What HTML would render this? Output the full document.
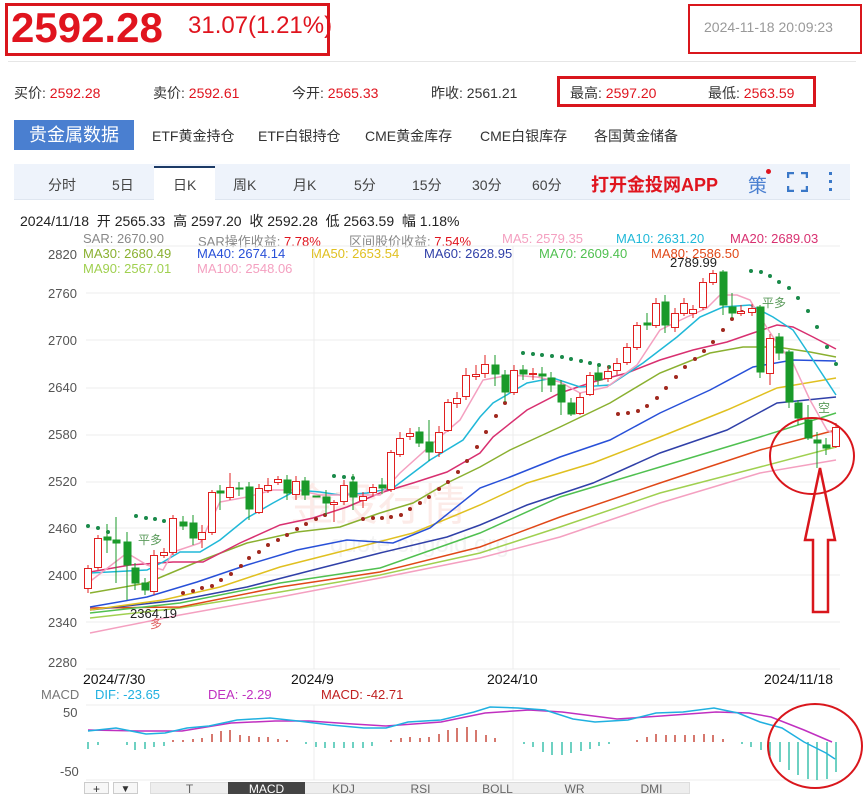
<!DOCTYPE html>
<html><head><meta charset="utf-8"><style>
*{margin:0;padding:0;box-sizing:border-box}
body{width:864px;height:791px;overflow:hidden;background:#fff;font-family:"Liberation Sans","Noto Sans CJK SC",sans-serif;position:relative;color:#333}
.a{position:absolute;white-space:nowrap}
.r{color:#e0141e}
.q{font-size:14px}
.lg{font-size:13px}
.tb{position:absolute;top:782px;height:12px;font-size:12px;line-height:14px;color:#666;text-align:center;width:77px}
</style></head><body>
<div class="a" style="left:5px;top:3px;width:325px;height:53px;border:3px solid #d9161c"></div>
<div class="a r" style="left:11px;top:4px;font-size:42px;font-weight:bold;letter-spacing:0">2592.28</div>
<div class="a r" style="left:188px;top:12px;font-size:24px">31.07(1.21%)</div>
<div class="a" style="left:688px;top:4px;width:174px;height:50px;border:2px solid #d9161c"></div>
<div class="a" style="left:704px;top:19px;font-size:14px;color:#999">2024-11-18 20:09:23</div>
<div class="a" style="left:8px;top:61px;width:848px;height:1px;background:#e6e6e6"></div>

<div class="a q" style="left:14px;top:83px">买价:&nbsp;<span class="r">2592.28</span></div>
<div class="a q" style="left:153px;top:83px">卖价:&nbsp;<span class="r">2592.61</span></div>
<div class="a q" style="left:292px;top:83px">今开:&nbsp;<span class="r">2565.33</span></div>
<div class="a q" style="left:431px;top:83px">昨收:&nbsp;2561.21</div>
<div class="a q" style="left:570px;top:83px">最高:&nbsp;<span class="r">2597.20</span></div>
<div class="a q" style="left:708px;top:83px">最低:&nbsp;<span class="r">2563.59</span></div>
<div class="a" style="left:557px;top:76px;width:259px;height:31px;border:3px solid #d9161c"></div>

<div class="a" style="left:14px;top:120px;width:120px;height:30px;background:#4a7fd0;color:#fff;font-size:18px;line-height:30px;text-align:center">贵金属数据</div>
<div class="a q" style="left:152px;top:126px">ETF黄金持仓</div>
<div class="a q" style="left:258px;top:126px">ETF白银持仓</div>
<div class="a q" style="left:365px;top:126px">CME黄金库存</div>
<div class="a q" style="left:480px;top:126px">CME白银库存</div>
<div class="a q" style="left:594px;top:126px">各国黄金储备</div>

<div class="a" style="left:14px;top:164px;width:836px;height:36px;background:#eef3fb;border-bottom:1px solid #dfe6f0"></div>
<div class="a" style="left:154px;top:166px;width:61px;height:35px;background:#fff;border-top:2px solid #1c3a66"></div>
<div class="a q" style="left:48px;top:175px;color:#444">分时</div>
<div class="a q" style="left:112px;top:175px;color:#444">5日</div>
<div class="a q" style="left:173px;top:175px;color:#444">日K</div>
<div class="a q" style="left:233px;top:175px;color:#444">周K</div>
<div class="a q" style="left:293px;top:175px;color:#444">月K</div>
<div class="a q" style="left:354px;top:175px;color:#444">5分</div>
<div class="a q" style="left:412px;top:175px;color:#444">15分</div>
<div class="a q" style="left:472px;top:175px;color:#444">30分</div>
<div class="a q" style="left:532px;top:175px;color:#444">60分</div>
<div class="a r" style="left:591px;top:171px;font-size:18px;font-weight:bold">打开金投网APP</div>
<div class="a" style="left:748px;top:171px;font-size:19px;color:#4a7fd0">策</div>
<div class="a" style="left:766px;top:169px;width:5px;height:5px;border-radius:50%;background:#e0141e"></div>
<svg class="a" style="left:787px;top:172px" width="21" height="20"><path d="M1 6V1h6M14 1h6v5M20 14v5h-6M7 19H1v-5" stroke="#3a78c8" stroke-width="2.5" fill="none"/></svg>
<svg class="a" style="left:828px;top:171px" width="6" height="22"><rect x="1" y="1" width="3" height="3" fill="#3a78c8"/><rect x="1" y="9" width="3" height="3" fill="#3a78c8"/><rect x="1" y="17" width="3" height="3" fill="#3a78c8"/></svg>

<div class="a q" style="left:20px;top:211px;color:#222">2024/11/18 &nbsp;开 2565.33 &nbsp;高 2597.20 &nbsp;收 2592.28 &nbsp;低 2563.59 &nbsp;幅 1.18%</div>
<div class="a lg" style="left:83px;top:231px;color:#888">SAR: 2670.90</div>
<div class="a lg" style="left:198px;top:231px;color:#888">SAR操作收益: <span class="r">7.78%</span></div>
<div class="a lg" style="left:349px;top:231px;color:#888">区间股价收益: <span class="r">7.54%</span></div>
<div class="a lg" style="left:502px;top:231px;color:#f4a0c0">MA5: 2579.35</div>
<div class="a lg" style="left:616px;top:231px;color:#20b8d8">MA10: 2631.20</div>
<div class="a lg" style="left:730px;top:231px;color:#d83070">MA20: 2689.03</div>
<div class="a lg" style="left:83px;top:246px;color:#8ab030">MA30: 2680.49</div>
<div class="a lg" style="left:197px;top:246px;color:#2850d8">MA40: 2674.14</div>
<div class="a lg" style="left:311px;top:246px;color:#e0c020">MA50: 2653.54</div>
<div class="a lg" style="left:424px;top:246px;color:#3040a8">MA60: 2628.95</div>
<div class="a lg" style="left:539px;top:246px;color:#50c050">MA70: 2609.40</div>
<div class="a lg" style="left:651px;top:246px;color:#e04818">MA80: 2586.50</div>
<div class="a lg" style="left:83px;top:261px;color:#a0d050">MA90: 2567.01</div>
<div class="a lg" style="left:197px;top:261px;color:#f4a0c0">MA100: 2548.06</div>

<div class="a lg" style="left:48px;top:247px;color:#555">2820</div>
<div class="a lg" style="left:48px;top:286px;color:#555">2760</div>
<div class="a lg" style="left:48px;top:333px;color:#555">2700</div>
<div class="a lg" style="left:48px;top:380px;color:#555">2640</div>
<div class="a lg" style="left:48px;top:427px;color:#555">2580</div>
<div class="a lg" style="left:48px;top:474px;color:#555">2520</div>
<div class="a lg" style="left:48px;top:521px;color:#555">2460</div>
<div class="a lg" style="left:48px;top:568px;color:#555">2400</div>
<div class="a lg" style="left:48px;top:615px;color:#555">2340</div>
<div class="a lg" style="left:48px;top:655px;color:#555">2280</div>

<svg class="a" style="left:0;top:0" width="864" height="791">
<g stroke="#ececec" stroke-width="1">
<line x1="86" y1="246" x2="840" y2="246"/><line x1="86" y1="293" x2="840" y2="293"/><line x1="86" y1="340" x2="840" y2="340"/><line x1="86" y1="388" x2="840" y2="388"/><line x1="86" y1="435" x2="840" y2="435"/><line x1="86" y1="482" x2="840" y2="482"/><line x1="86" y1="528" x2="840" y2="528"/><line x1="86" y1="575" x2="840" y2="575"/><line x1="86" y1="622" x2="840" y2="622"/><line x1="86" y1="669" x2="840" y2="669"/>
<line x1="314" y1="246" x2="314" y2="669"/><line x1="513" y1="246" x2="513" y2="669"/>
<line x1="86" y1="705" x2="840" y2="705"/><line x1="86" y1="780" x2="840" y2="780"/>
<line x1="314" y1="705" x2="314" y2="780"/><line x1="513" y1="705" x2="513" y2="780"/>
</g>
<text x="290" y="520" font-size="44" fill="#fcebe8" font-family="Noto Sans CJK SC">金投行情</text>
<text x="330" y="552" font-size="24" fill="#f3f3f3" font-family="Liberation Sans">quote.cngold.org</text>
<g fill="none" stroke-width="1.5">
<polyline stroke="#f4a0c0" points="90,633 180,615 280,597 380,578 480,558 560,537 660,503 760,473 836,460"/>
<polyline stroke="#a0d050" points="90,618 180,608 280,592 380,575 480,553 560,527 660,493 760,467 836,447"/>
<polyline stroke="#e04818" points="90,608 180,607 280,587 380,572 480,547 560,517 660,483 760,450 836,430"/>
<polyline stroke="#50c050" points="90,613 180,603 280,583 380,568 480,533 560,497 660,467 760,437 836,413"/>
<polyline stroke="#3040a8" points="90,610 180,600 247,587 313,570 380,553 447,537 480,525 527,505 593,483 660,453 727,430 777,403 836,397"/>
<polyline stroke="#e0c020" points="90,610 163,600 220,587 280,567 347,550 413,533 480,505 527,483 593,463 660,437 727,410 777,388 836,378"/>
<polyline stroke="#2850d8" points="90,607 147,597 197,582 247,565 297,550 347,540 393,543 430,528 480,488 510,477 560,457 610,440 660,413 710,390 753,367 793,360 836,361"/>
<polyline stroke="#8ab030" points="90,593 147,583 197,562 247,543 297,532 340,527 380,513 413,503 447,483 480,467 510,450 560,427 610,403 660,373 710,353 743,347 777,347 810,352 836,357"/>
<polyline stroke="#d83070" points="90,572 130,565 173,562 203,562 240,543 280,525 313,518 347,507 380,493 413,483 447,472 480,453 493,437 527,410 560,393 593,382 627,373 660,360 693,350 727,342 753,333 777,325 793,327 813,337 836,349"/>
<polyline stroke="#20b8d8" points="90,573 147,570 163,562 180,552 200,552 220,540 247,518 273,503 297,490 320,492 340,495 367,493 393,488 430,460 463,440 480,417 493,403 527,383 553,378 580,387 610,385 643,363 677,337 700,317 723,307 750,305 773,317 793,330 813,360 836,395"/>
<polyline stroke="#f4a0c0" points="88,583 127,553 147,565 163,570 173,552 200,543 220,502 247,497 273,490 297,490 320,495 347,495 380,495 400,473 440,437 460,420 483,380 510,375 537,377 560,382 580,393 607,387 637,365 660,330 687,317 707,308 720,295 737,295 750,300 760,317 777,343 793,363 810,400 827,430 836,435"/>
</g>
<g fill="#1a8a4a">
<circle cx="88" cy="526" r="2"/><circle cx="98" cy="528" r="2"/><circle cx="108" cy="532" r="2"/><circle cx="136" cy="516" r="2"/><circle cx="146" cy="518" r="2"/><circle cx="155" cy="519" r="2"/><circle cx="164" cy="521" r="2"/><circle cx="174" cy="523" r="2"/><circle cx="334" cy="476" r="2"/><circle cx="344" cy="477" r="2"/><circle cx="353" cy="478" r="2"/>
<circle cx="523" cy="353" r="2"/><circle cx="533" cy="354" r="2"/><circle cx="542" cy="355" r="2"/><circle cx="552" cy="356" r="2"/><circle cx="562" cy="357" r="2"/><circle cx="571" cy="359" r="2"/><circle cx="581" cy="361" r="2"/><circle cx="590" cy="363" r="2"/><circle cx="599" cy="365" r="2"/><circle cx="609" cy="367" r="2"/>
<circle cx="751" cy="271" r="2"/><circle cx="761" cy="272" r="2"/><circle cx="770" cy="276" r="2"/><circle cx="779" cy="282" r="2"/><circle cx="789" cy="288" r="2"/><circle cx="798" cy="298" r="2"/><circle cx="808" cy="311" r="2"/><circle cx="817" cy="327" r="2"/><circle cx="827" cy="347" r="2"/><circle cx="836" cy="364" r="2"/>
</g>
<g fill="#a0281e">
<circle cx="183" cy="593" r="2"/><circle cx="193" cy="591" r="2"/><circle cx="202" cy="588" r="2"/><circle cx="212" cy="586" r="2"/><circle cx="221" cy="580" r="2"/><circle cx="231" cy="574" r="2"/><circle cx="241" cy="566" r="2"/><circle cx="249" cy="558" r="2"/><circle cx="259" cy="552" r="2"/><circle cx="268" cy="545" r="2"/><circle cx="278" cy="540" r="2"/><circle cx="287" cy="535" r="2"/><circle cx="297" cy="529" r="2"/><circle cx="306" cy="524" r="2"/><circle cx="316" cy="519" r="2"/><circle cx="325" cy="515" r="2"/>
<circle cx="363" cy="519" r="2"/><circle cx="373" cy="518" r="2"/><circle cx="382" cy="518" r="2"/><circle cx="391" cy="517" r="2"/><circle cx="401" cy="515" r="2"/><circle cx="410" cy="509" r="2"/><circle cx="420" cy="503" r="2"/><circle cx="429" cy="497" r="2"/><circle cx="439" cy="489" r="2"/><circle cx="448" cy="482" r="2"/><circle cx="458" cy="472" r="2"/><circle cx="467" cy="461" r="2"/><circle cx="477" cy="447" r="2"/><circle cx="486" cy="432" r="2"/><circle cx="496" cy="416" r="2"/><circle cx="505" cy="403" r="2"/>
<circle cx="618" cy="414" r="2"/><circle cx="628" cy="413" r="2"/><circle cx="638" cy="411" r="2"/><circle cx="647" cy="406" r="2"/><circle cx="657" cy="398" r="2"/><circle cx="666" cy="388" r="2"/><circle cx="676" cy="377" r="2"/><circle cx="685" cy="367" r="2"/><circle cx="695" cy="359" r="2"/><circle cx="704" cy="351" r="2"/><circle cx="713" cy="342" r="2"/><circle cx="723" cy="330" r="2"/><circle cx="732" cy="319" r="2"/><circle cx="742" cy="312" r="2"/><circle cx="751" cy="310" r="2"/>
</g>
<g stroke="#1a9a2a" fill="#1a9a2a" stroke-width="1">
<line x1="107" y1="524" x2="107" y2="553"/><rect x="104" y="537" width="7" height="3"/>
<line x1="116" y1="517" x2="116" y2="583"/><rect x="113" y="540" width="7" height="3"/>
<line x1="127" y1="532" x2="127" y2="600"/><rect x="124" y="542" width="7" height="23"/>
<line x1="135" y1="563" x2="135" y2="590"/><rect x="132" y="568" width="7" height="15"/>
<line x1="145" y1="578" x2="145" y2="595"/><rect x="142" y="583" width="7" height="7"/>
<line x1="183" y1="516" x2="183" y2="530"/><rect x="180" y="522" width="7" height="4"/>
<line x1="193" y1="515" x2="193" y2="545"/><rect x="190" y="523" width="7" height="15"/>
<line x1="220" y1="485" x2="220" y2="510"/><rect x="217" y="491" width="7" height="2"/>
<line x1="239" y1="482" x2="239" y2="496"/><rect x="236" y="488" width="7" height="1"/>
<line x1="249" y1="482" x2="249" y2="520"/><rect x="246" y="487" width="7" height="22"/>
<line x1="287" y1="475" x2="287" y2="500"/><rect x="284" y="480" width="7" height="13"/>
<line x1="305" y1="477" x2="305" y2="500"/><rect x="302" y="481" width="7" height="14"/>
<line x1="316" y1="497" x2="316" y2="497"/><rect x="313" y="496" width="7" height="1"/>
<line x1="326" y1="490" x2="326" y2="515"/><rect x="323" y="497" width="7" height="6"/>
<line x1="353" y1="474" x2="353" y2="510"/><rect x="350" y="482" width="7" height="15"/>
<line x1="382" y1="478" x2="382" y2="494"/><rect x="379" y="485" width="7" height="3"/>
<line x1="419" y1="427" x2="419" y2="447"/><rect x="416" y="432" width="7" height="11"/>
<line x1="429" y1="420" x2="429" y2="461"/><rect x="426" y="442" width="7" height="10"/>
<line x1="495" y1="355" x2="495" y2="386"/><rect x="492" y="365" width="7" height="9"/>
<line x1="505" y1="370" x2="505" y2="402"/><rect x="502" y="375" width="7" height="17"/>
<line x1="523" y1="365" x2="523" y2="380"/><rect x="520" y="370" width="7" height="4"/>
<line x1="542" y1="367" x2="542" y2="392"/><rect x="539" y="374" width="7" height="2"/>
<line x1="551" y1="372" x2="551" y2="392"/><rect x="548" y="378" width="7" height="7"/>
<line x1="561" y1="380" x2="561" y2="415"/><rect x="558" y="385" width="7" height="17"/>
<line x1="571" y1="398" x2="571" y2="416"/><rect x="568" y="403" width="7" height="11"/>
<line x1="598" y1="365" x2="598" y2="385"/><rect x="595" y="373" width="7" height="7"/>
<line x1="647" y1="313" x2="647" y2="330"/><rect x="644" y="323" width="7" height="2"/>
<line x1="665" y1="295" x2="665" y2="333"/><rect x="662" y="302" width="7" height="23"/>
<line x1="723" y1="270" x2="723" y2="315"/><rect x="720" y="272" width="7" height="33"/>
<line x1="732" y1="293" x2="732" y2="318"/><rect x="729" y="307" width="7" height="6"/>
<line x1="760" y1="305" x2="760" y2="378"/><rect x="757" y="307" width="7" height="65"/>
<line x1="779" y1="333" x2="779" y2="360"/><rect x="776" y="337" width="7" height="16"/>
<line x1="789" y1="350" x2="789" y2="408"/><rect x="786" y="352" width="7" height="50"/>
<line x1="798" y1="400" x2="798" y2="425"/><rect x="795" y="403" width="7" height="15"/>
<line x1="808" y1="405" x2="808" y2="440"/><rect x="805" y="420" width="7" height="18"/>
<line x1="817" y1="432" x2="817" y2="468"/><rect x="814" y="440" width="7" height="3"/>
<line x1="826" y1="438" x2="826" y2="455"/><rect x="823" y="445" width="7" height="3"/>
</g>
<g stroke="#e02020" fill="#fff" stroke-width="1">
<line x1="88" y1="565" x2="88" y2="593"/><rect x="84.5" y="568.5" width="7" height="20"/>
<line x1="98" y1="535" x2="98" y2="570"/><rect x="94.5" y="538.5" width="7" height="29"/>
<line x1="154" y1="550" x2="154" y2="595"/><rect x="150.5" y="555.5" width="7" height="36"/>
<line x1="164" y1="548" x2="164" y2="558"/><rect x="160.5" y="552.5" width="7" height="3"/>
<line x1="173" y1="515" x2="173" y2="555"/><rect x="169.5" y="518.5" width="7" height="34"/>
<line x1="202" y1="525" x2="202" y2="548"/><rect x="198.5" y="532.5" width="7" height="7"/>
<line x1="212" y1="490" x2="212" y2="535"/><rect x="208.5" y="492.5" width="7" height="40"/>
<line x1="230" y1="473" x2="230" y2="500"/><rect x="226.5" y="487.5" width="7" height="10"/>
<line x1="259" y1="484" x2="259" y2="514"/><rect x="255.5" y="488.5" width="7" height="24"/>
<line x1="268" y1="478" x2="268" y2="493"/><rect x="264.5" y="485.5" width="7" height="5"/>
<line x1="278" y1="476" x2="278" y2="485"/><rect x="274.5" y="479.5" width="7" height="3"/>
<line x1="296" y1="476" x2="296" y2="500"/><rect x="292.5" y="481.5" width="7" height="13"/>
<line x1="334" y1="500" x2="334" y2="522"/><rect x="330.5" y="502.5" width="7" height="2"/>
<line x1="344" y1="480" x2="344" y2="505"/><rect x="340.5" y="485.5" width="7" height="16"/>
<line x1="363" y1="492" x2="363" y2="508"/><rect x="359.5" y="496.5" width="7" height="4"/>
<line x1="373" y1="484" x2="373" y2="496"/><rect x="369.5" y="487.5" width="7" height="5"/>
<line x1="391" y1="450" x2="391" y2="492"/><rect x="387.5" y="452.5" width="7" height="37"/>
<line x1="400" y1="432" x2="400" y2="457"/><rect x="396.5" y="438.5" width="7" height="16"/>
<line x1="410" y1="428" x2="410" y2="440"/><rect x="406.5" y="433.5" width="7" height="3"/>
<line x1="439" y1="426" x2="439" y2="457"/><rect x="435.5" y="432.5" width="7" height="20"/>
<line x1="448" y1="399" x2="448" y2="432"/><rect x="444.5" y="402.5" width="7" height="28"/>
<line x1="457" y1="392" x2="457" y2="408"/><rect x="453.5" y="398.5" width="7" height="5"/>
<line x1="466" y1="368" x2="466" y2="400"/><rect x="462.5" y="375.5" width="7" height="21"/>
<line x1="476" y1="365" x2="476" y2="380"/><rect x="472.5" y="374.5" width="7" height="2"/>
<line x1="485" y1="355" x2="485" y2="378"/><rect x="481.5" y="364.5" width="7" height="9"/>
<line x1="514" y1="365" x2="514" y2="395"/><rect x="510.5" y="370.5" width="7" height="22"/>
<line x1="533" y1="368" x2="533" y2="380"/><rect x="529.5" y="373.5" width="7" height="1"/>
<line x1="580" y1="393" x2="580" y2="415"/><rect x="576.5" y="397.5" width="7" height="16"/>
<line x1="590" y1="372" x2="590" y2="396"/><rect x="586.5" y="375.5" width="7" height="19"/>
<line x1="608" y1="366" x2="608" y2="382"/><rect x="604.5" y="371.5" width="7" height="7"/>
<line x1="617" y1="358" x2="617" y2="375"/><rect x="613.5" y="363.5" width="7" height="7"/>
<line x1="627" y1="343" x2="627" y2="365"/><rect x="623.5" y="347.5" width="7" height="15"/>
<line x1="637" y1="322" x2="637" y2="350"/><rect x="633.5" y="325.5" width="7" height="22"/>
<line x1="656" y1="298" x2="656" y2="328"/><rect x="652.5" y="303.5" width="7" height="22"/>
<line x1="675" y1="308" x2="675" y2="332"/><rect x="671.5" y="313.5" width="7" height="14"/>
<line x1="684" y1="298" x2="684" y2="316"/><rect x="680.5" y="303.5" width="7" height="10"/>
<line x1="693" y1="305" x2="693" y2="318"/><rect x="689.5" y="309.5" width="7" height="4"/>
<line x1="703" y1="278" x2="703" y2="310"/><rect x="699.5" y="282.5" width="7" height="25"/>
<line x1="713" y1="270" x2="713" y2="285"/><rect x="709.5" y="273.5" width="7" height="9"/>
<line x1="741" y1="305" x2="741" y2="316"/><rect x="737.5" y="311.5" width="7" height="2"/>
<line x1="752" y1="304" x2="752" y2="316"/><rect x="748.5" y="308.5" width="7" height="4"/>
<line x1="770" y1="334" x2="770" y2="385"/><rect x="766.5" y="338.5" width="7" height="35"/>
<line x1="836" y1="423" x2="836" y2="448"/><rect x="832.5" y="427.5" width="7" height="19"/>
</g>
<text x="670" y="267" font-size="13" fill="#222">2789.99</text>
<text x="130" y="618" font-size="13" fill="#222">2364.19</text>
<text x="150" y="628" font-size="12" fill="#e06060">多</text>
<text x="138" y="544" font-size="12" fill="#5a9a5a">平多</text>
<text x="762" y="307" font-size="12" fill="#5a9a5a">平多</text>
<text x="818" y="412" font-size="12" fill="#5a9a5a">空</text>
<ellipse cx="812" cy="456" rx="42" ry="38" fill="none" stroke="#d9161c" stroke-width="2"/>
<path d="M820,468 L835,540 L828,540 L828,612 L813,612 L813,540 L805,540 Z" fill="none" stroke="#d9161c" stroke-width="2.5"/>
<g stroke-width="1.3">
<line x1="88" y1="742" x2="88" y2="749" stroke="#20b8a0"/><line x1="98" y1="742" x2="98" y2="745" stroke="#20b8a0"/><line x1="127" y1="742" x2="127" y2="745" stroke="#20b8a0"/><line x1="135" y1="742" x2="135" y2="750" stroke="#20b8a0"/><line x1="145" y1="742" x2="145" y2="749" stroke="#20b8a0"/><line x1="154" y1="742" x2="154" y2="747" stroke="#20b8a0"/><line x1="164" y1="742" x2="164" y2="746" stroke="#20b8a0"/>
<line x1="173" y1="742" x2="173" y2="740" stroke="#c03020"/><line x1="183" y1="742" x2="183" y2="740" stroke="#c03020"/><line x1="193" y1="742" x2="193" y2="739" stroke="#c03020"/><line x1="202" y1="742" x2="202" y2="738" stroke="#c03020"/><line x1="212" y1="742" x2="212" y2="734" stroke="#c03020"/><line x1="221" y1="742" x2="221" y2="731" stroke="#c03020"/><line x1="230" y1="742" x2="230" y2="730" stroke="#c03020"/><line x1="240" y1="742" x2="240" y2="735" stroke="#c03020"/><line x1="249" y1="742" x2="249" y2="736" stroke="#c03020"/><line x1="259" y1="742" x2="259" y2="737" stroke="#c03020"/><line x1="268" y1="742" x2="268" y2="737" stroke="#c03020"/><line x1="278" y1="742" x2="278" y2="739" stroke="#c03020"/><line x1="287" y1="742" x2="287" y2="740" stroke="#c03020"/>
<line x1="306" y1="742" x2="306" y2="744" stroke="#20b8a0"/><line x1="316" y1="742" x2="316" y2="747" stroke="#20b8a0"/><line x1="325" y1="742" x2="325" y2="748" stroke="#20b8a0"/><line x1="334" y1="742" x2="334" y2="748" stroke="#20b8a0"/><line x1="344" y1="742" x2="344" y2="748" stroke="#20b8a0"/><line x1="353" y1="742" x2="353" y2="748" stroke="#20b8a0"/><line x1="363" y1="742" x2="363" y2="748" stroke="#20b8a0"/><line x1="372" y1="742" x2="372" y2="746" stroke="#20b8a0"/>
<line x1="391" y1="742" x2="391" y2="740" stroke="#c03020"/><line x1="401" y1="742" x2="401" y2="738" stroke="#c03020"/><line x1="410" y1="742" x2="410" y2="737" stroke="#c03020"/><line x1="420" y1="742" x2="420" y2="738" stroke="#c03020"/><line x1="429" y1="742" x2="429" y2="737" stroke="#c03020"/><line x1="439" y1="742" x2="439" y2="734" stroke="#c03020"/><line x1="448" y1="742" x2="448" y2="730" stroke="#c03020"/><line x1="457" y1="742" x2="457" y2="728" stroke="#c03020"/><line x1="467" y1="742" x2="467" y2="727" stroke="#c03020"/><line x1="476" y1="742" x2="476" y2="730" stroke="#c03020"/><line x1="486" y1="742" x2="486" y2="735" stroke="#c03020"/><line x1="495" y1="742" x2="495" y2="738" stroke="#c03020"/>
<line x1="524" y1="742" x2="524" y2="744" stroke="#20b8a0"/><line x1="533" y1="742" x2="533" y2="747" stroke="#20b8a0"/><line x1="543" y1="742" x2="543" y2="752" stroke="#20b8a0"/><line x1="552" y1="742" x2="552" y2="755" stroke="#20b8a0"/><line x1="562" y1="742" x2="562" y2="755" stroke="#20b8a0"/><line x1="571" y1="742" x2="571" y2="753" stroke="#20b8a0"/><line x1="581" y1="742" x2="581" y2="751" stroke="#20b8a0"/><line x1="590" y1="742" x2="590" y2="749" stroke="#20b8a0"/><line x1="599" y1="742" x2="599" y2="746" stroke="#20b8a0"/><line x1="609" y1="742" x2="609" y2="744" stroke="#20b8a0"/>
<line x1="637" y1="742" x2="637" y2="740" stroke="#c03020"/><line x1="647" y1="742" x2="647" y2="737" stroke="#c03020"/><line x1="656" y1="742" x2="656" y2="734" stroke="#c03020"/><line x1="666" y1="742" x2="666" y2="735" stroke="#c03020"/><line x1="675" y1="742" x2="675" y2="735" stroke="#c03020"/><line x1="685" y1="742" x2="685" y2="735" stroke="#c03020"/><line x1="694" y1="742" x2="694" y2="735" stroke="#c03020"/><line x1="704" y1="742" x2="704" y2="734" stroke="#c03020"/><line x1="713" y1="742" x2="713" y2="735" stroke="#c03020"/><line x1="723" y1="742" x2="723" y2="739" stroke="#c03020"/>
<line x1="742" y1="742" x2="742" y2="744" stroke="#20b8a0"/><line x1="751" y1="742" x2="751" y2="747" stroke="#20b8a0"/><line x1="761" y1="742" x2="761" y2="750" stroke="#20b8a0"/><line x1="770" y1="742" x2="770" y2="756" stroke="#20b8a0"/><line x1="780" y1="742" x2="780" y2="762" stroke="#20b8a0"/><line x1="789" y1="742" x2="789" y2="770" stroke="#20b8a0"/><line x1="798" y1="742" x2="798" y2="775" stroke="#20b8a0"/><line x1="808" y1="742" x2="808" y2="779" stroke="#20b8a0"/><line x1="817" y1="742" x2="817" y2="780" stroke="#20b8a0"/><line x1="827" y1="742" x2="827" y2="779" stroke="#20b8a0"/><line x1="836" y1="742" x2="836" y2="772" stroke="#20b8a0"/>
</g>
<polyline fill="none" stroke="#c030c0" stroke-width="1.5" points="88,730 138,731 182,731 231,723 275,721 309,721 353,724 386,726 441,722 485,713 529,710 562,712 617,719 661,716 716,712 749,713 771,717 804,730 832,742"/>
<polyline fill="none" stroke="#20b0e0" stroke-width="1.5" points="88,731 116,728 146,734 165,733 187,728 209,726 237,720 270,718 298,721 331,725 364,728 386,728 408,722 441,720 474,712 490,707 518,708 545,710 573,719 595,722 628,720 656,713 683,712 714,708 738,713 760,722 782,728 804,742 826,753 835,759"/>
<ellipse cx="815" cy="746" rx="47" ry="42" fill="none" stroke="#d9161c" stroke-width="2"/>
</svg>

<div class="a q" style="left:83px;top:671px;color:#111">2024/7/30</div>
<div class="a q" style="left:291px;top:671px;color:#111">2024/9</div>
<div class="a q" style="left:487px;top:671px;color:#111">2024/10</div>
<div class="a q" style="left:764px;top:671px;color:#111">2024/11/18</div>
<div class="a lg" style="left:41px;top:687px;color:#777">MACD</div>
<div class="a lg" style="left:95px;top:687px;color:#20b0e0">DIF: -23.65</div>
<div class="a lg" style="left:208px;top:687px;color:#c030c0">DEA: -2.29</div>
<div class="a lg" style="left:321px;top:687px;color:#c02020">MACD: -42.71</div>
<div class="a lg" style="left:63px;top:705px;color:#555">50</div>
<div class="a lg" style="left:60px;top:764px;color:#555">-50</div>

<div class="a" style="left:84px;top:782px;width:25px;height:12px;border:1px solid #ccc;background:#f7f7f7;font-size:12px;text-align:center;line-height:12px">+</div>
<div class="a" style="left:113px;top:782px;width:25px;height:12px;border:1px solid #ccc;background:#f7f7f7;font-size:10px;text-align:center;line-height:14px">▼</div>
<div class="a" style="left:150px;top:782px;width:540px;height:12px;background:#eee;border:1px solid #ddd"></div>
<div class="tb" style="left:151px">T</div>
<div class="tb" style="left:228px;background:#444;color:#fff">MACD</div>
<div class="tb" style="left:305px">KDJ</div>
<div class="tb" style="left:382px">RSI</div>
<div class="tb" style="left:459px">BOLL</div>
<div class="tb" style="left:536px">WR</div>
<div class="tb" style="left:613px">DMI</div>
</body></html>
